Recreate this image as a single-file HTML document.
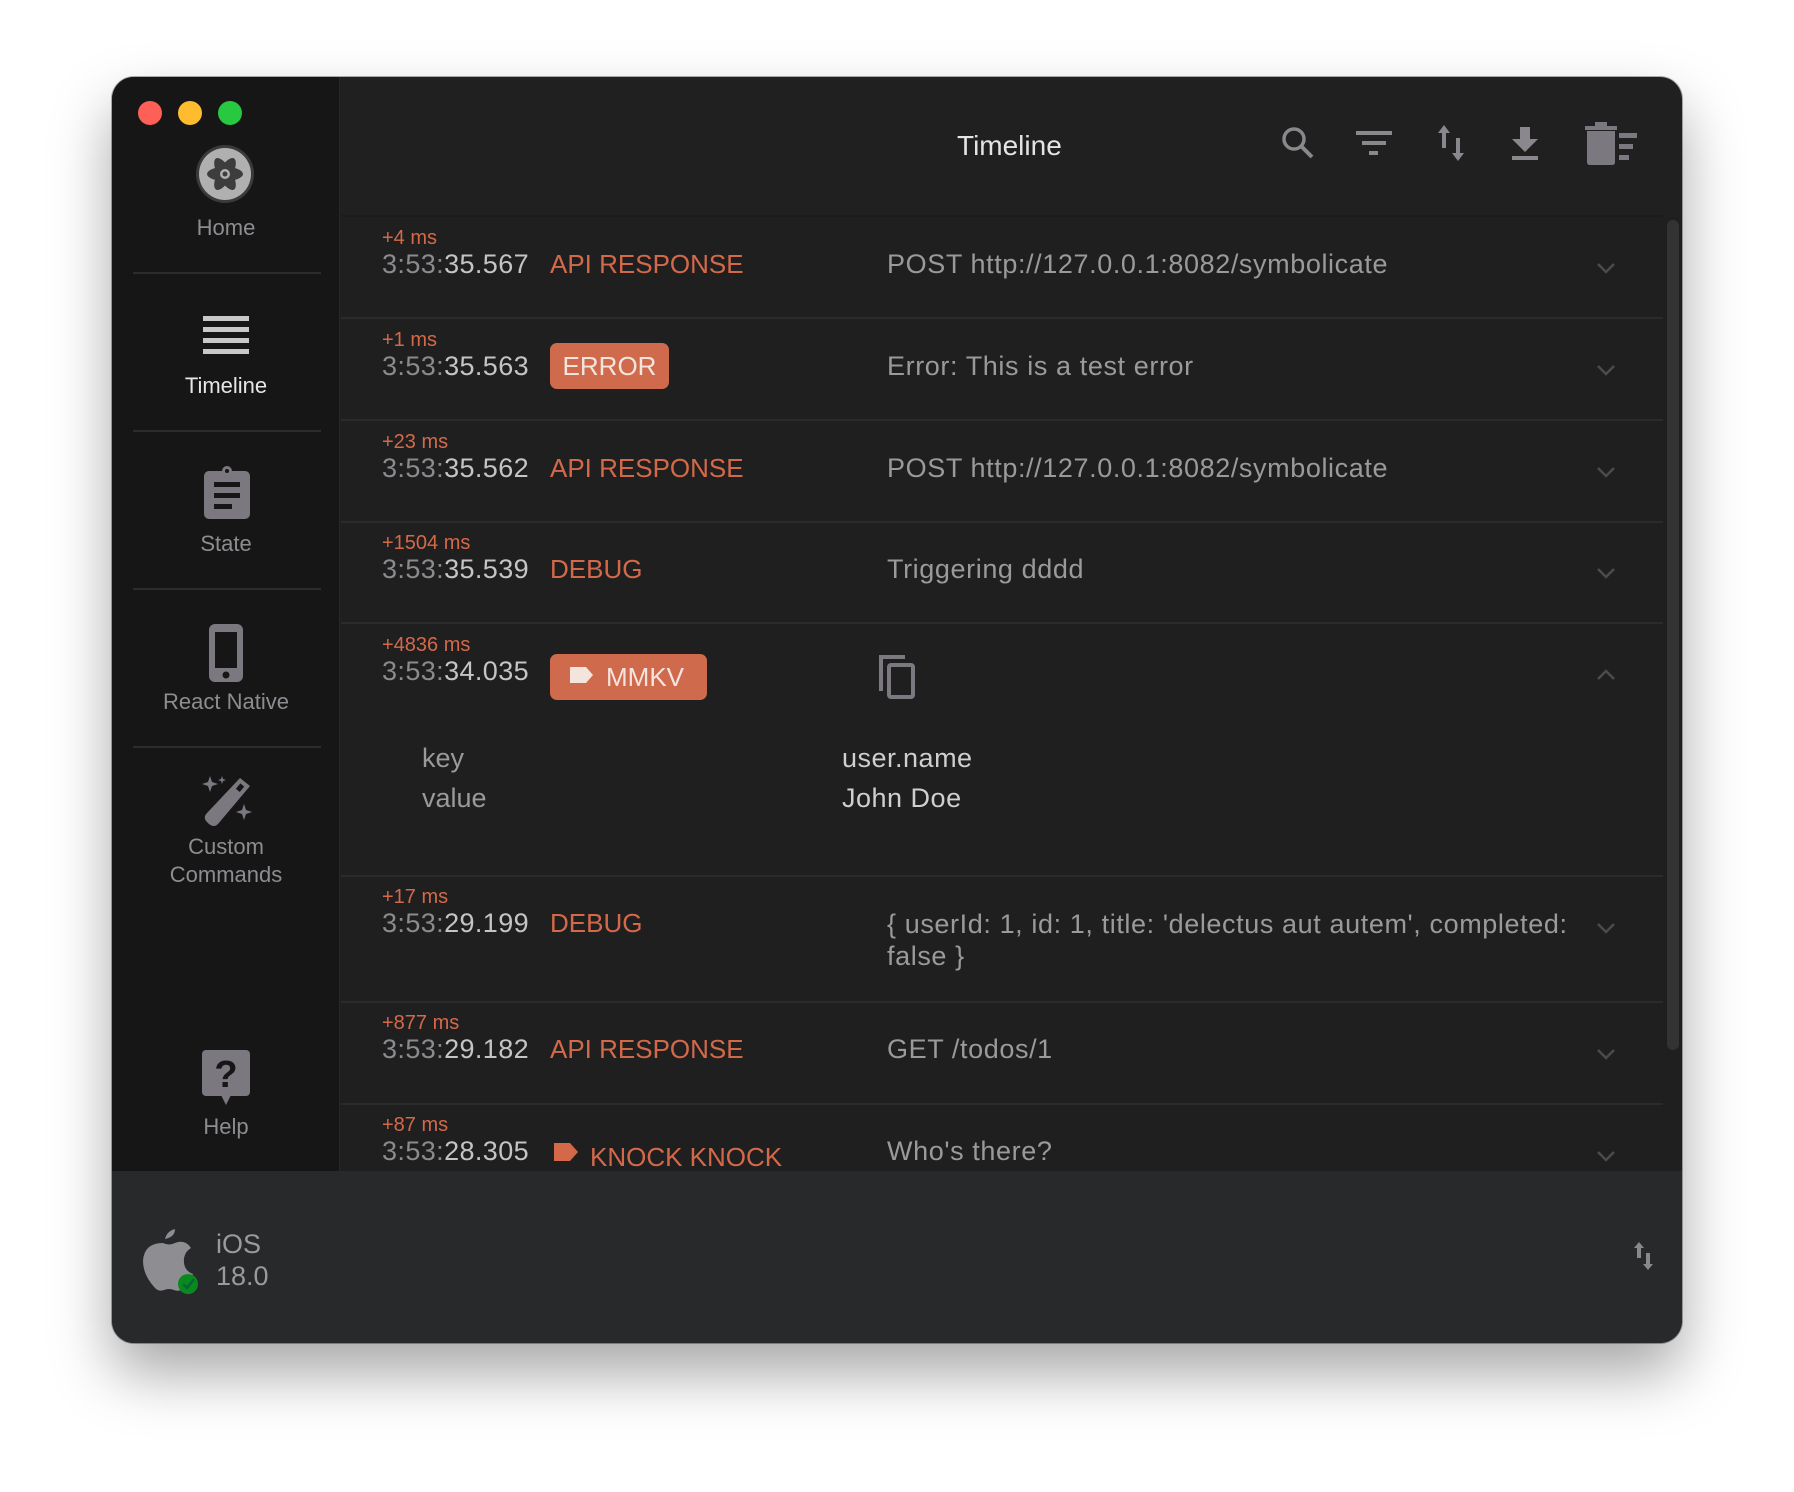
<!DOCTYPE html>
<html><head><meta charset="utf-8"><style>
*{margin:0;padding:0;box-sizing:border-box}
body{width:1794px;height:1492px;background:#fff;font-family:"Liberation Sans",sans-serif;position:relative;overflow:hidden}
.win{position:absolute;left:112px;top:77px;width:1570px;height:1266px;border-radius:22px;background:#202020;overflow:hidden;box-shadow:0 30px 60px rgba(0,0,0,.35),0 0 0 1px rgba(0,0,0,.3)}
.side{position:absolute;left:0;top:0;width:228px;height:1094px;background:#161616;border-right:1px solid #262626}
.a{position:absolute;white-space:nowrap}
.dot{position:absolute;width:24px;height:24px;border-radius:50%;top:24px}
.sl{position:absolute;left:0;width:228px;text-align:center;color:#8e8c91;font-size:22px}
.sep{position:absolute;left:21px;width:188px;height:2px;background:#2c2c2c}
.bot{position:absolute;left:0;top:1094px;width:1570px;height:172px;background:#28292b}
.rl{position:absolute;left:229px;width:1322px;height:2px;background:#2b2b2b}
.ms{position:absolute;left:270px;color:#d4694a;font-size:20px;white-space:nowrap}
.tm{position:absolute;left:270px;color:#8b8b8f;font-size:27px;letter-spacing:.4px;white-space:nowrap}
.tm b{font-weight:normal;color:#c4c4c4}
.tag{position:absolute;left:438px;color:#d4694a;font-size:26px;white-space:nowrap}
.msg{position:absolute;left:775px;color:#9a9a9c;font-size:27px;letter-spacing:.6px;white-space:nowrap}
.chev{position:absolute;left:1484px}
</style></head><body>
<div class="win">
 <div class="side">
  <div class="dot" style="left:26px;background:#fe5f57"></div>
  <div class="dot" style="left:66px;background:#febc2e"></div>
  <div class="dot" style="left:106px;background:#28c840"></div>
  <svg class="a" style="left:83px;top:67px" width="60" height="60" viewBox="0 0 60 60"><circle cx="30" cy="30" r="29" fill="#3a3a3a"/><circle cx="30" cy="30" r="26" fill="#b0b0b0"/><g fill="#3d3d3d"><ellipse cx="30" cy="30" rx="18" ry="7"/><ellipse cx="30" cy="30" rx="18" ry="7" transform="rotate(60 30 30)"/><ellipse cx="30" cy="30" rx="18" ry="7" transform="rotate(-60 30 30)"/></g><circle cx="30" cy="30" r="5" fill="#b0b0b0"/><circle cx="30" cy="30" r="2.5" fill="#3d3d3d"/></svg>
  <div class="sl" style="top:138px">Home</div>
  <div class="sep" style="top:195px"></div>
  <svg class="a" style="left:89px;top:237px" width="50" height="40"><g fill="#c8c8c8"><rect x="2" y="2" width="46" height="5"/><rect x="2" y="13" width="46" height="5"/><rect x="2" y="24" width="46" height="5"/><rect x="2" y="35" width="46" height="5"/></g></svg>
  <div class="sl" style="top:296px;color:#e6e6e6">Timeline</div>
  <div class="sep" style="top:353px"></div>
  <svg class="a" style="left:90px;top:389px" width="50" height="54" viewBox="0 0 50 54"><rect x="2" y="5" width="46" height="48" rx="5" fill="#7b7880"/><circle cx="25" cy="5" r="5" fill="#7b7880"/><circle cx="25" cy="5" r="2" fill="#161616"/><g fill="#161616"><rect x="12" y="16" width="26" height="5"/><rect x="12" y="27" width="26" height="5"/><rect x="12" y="38" width="18" height="5"/></g></svg>
  <div class="sl" style="top:454px">State</div>
  <div class="sep" style="top:511px"></div>
  <svg class="a" style="left:95px;top:545px" width="38" height="62" viewBox="0 0 38 62"><rect x="2" y="2" width="34" height="58" rx="6" fill="#7b7880"/><rect x="8" y="10" width="22" height="36" fill="#161616"/><circle cx="19" cy="53" r="3.5" fill="#161616"/></svg>
  <div class="sl" style="top:612px">React Native</div>
  <div class="sep" style="top:669px"></div>
  <svg class="a" style="left:88px;top:697px" width="56" height="54" viewBox="0 0 56 54"><g fill="#7b7880"><path d="M40 4 L50 12 L18 50 Q14 54 9 50 L6 47 Q3 43 7 39Z"/><path d="M10 2 L12 8 L18 10 L12 12 L10 18 L8 12 L2 10 L8 8Z"/><path d="M22 2 L23 5 L26 6 L23 7 L22 10 L21 7 L18 6 L21 5Z"/><path d="M44 30 L46 36 L52 38 L46 40 L44 46 L42 40 L36 38 L42 36Z"/></g><rect x="38" y="10" width="5" height="7" transform="rotate(40 40 13)" fill="#161616"/></svg>
  <div class="sl" style="top:756px;line-height:28px">Custom<br>Commands</div>
  <svg class="a" style="left:89px;top:972px" width="50" height="58" viewBox="0 0 50 58"><rect x="1" y="1" width="48" height="46" rx="4" fill="#7b7880"/><path d="M20 46 L25 56 L30 46Z" fill="#7b7880"/><text x="25" y="38" text-anchor="middle" font-family="Liberation Sans" font-weight="bold" font-size="38" fill="#161616">?</text></svg>
  <div class="sl" style="top:1037px">Help</div>
 </div>

 <div class="a" style="left:845px;top:53px;color:#e4e4e4;font-size:28px">Timeline</div>
 <svg class="a" style="left:1168px;top:48px" width="36" height="36" viewBox="0 0 36 36"><circle cx="14" cy="14" r="10" fill="none" stroke="#8a878d" stroke-width="3.5"/><path d="M21 21 L32 32" stroke="#8a878d" stroke-width="4"/></svg>
 <svg class="a" style="left:1243px;top:52px" width="38" height="30"><g fill="#8a878d"><rect x="1" y="2" width="36" height="4"/><rect x="7" y="12" width="24" height="4"/><rect x="14" y="22" width="9" height="4"/></g></svg>
 <svg class="a" style="left:1325px;top:47px" width="28" height="38" viewBox="0 0 28 38"><g fill="#8a878d"><path d="M7 1 L13 9 L9 9 L9 24 L5 24 L5 9 L1 9Z"/><path d="M21 37 L27 29 L23 29 L23 14 L19 14 L19 29 L15 29Z"/></g></svg>
 <svg class="a" style="left:1398px;top:48px" width="30" height="38" viewBox="0 0 30 38"><g fill="#8a878d"><path d="M10 2 L20 2 L20 14 L28 14 L15 27 L2 14 L10 14Z"/><rect x="2" y="31" width="26" height="4"/></g></svg>
 <svg class="a" style="left:1473px;top:43px" width="56" height="46" viewBox="0 0 56 46"><g fill="#7b7880"><rect x="0" y="6" width="32" height="4"/><rect x="10" y="2" width="12" height="5"/><path d="M2 11 L30 11 L30 42 Q30 45 27 45 L5 45 Q2 45 2 42Z"/><rect x="34" y="13" width="18" height="5"/><rect x="34" y="24" width="14" height="5"/><rect x="34" y="35" width="10" height="5"/></g></svg>
 <div class="rl" style="top:138px;background:#1b1b1b"></div>
 <div class="a" style="left:229px;top:140px;width:1341px;height:954px;background:#1f1f1f"></div>
 <div class="a" style="left:1555px;top:143px;width:12px;height:830px;border-radius:6px;background:#333"></div>

 <div class="ms" style="top:150px">+4 ms</div>
 <div class="tm" style="top:172px">3:53:<b>35.567</b></div>
 <div class="tag" style="top:172px">API RESPONSE</div>
 <div class="msg" style="top:172px">POST http://127.0.0.1:8082/symbolicate</div>
 <div class="rl" style="top:240px"></div>

 <div class="ms" style="top:252px">+1 ms</div>
 <div class="tm" style="top:274px">3:53:<b>35.563</b></div>
 <div class="a" style="left:438px;top:266px;width:119px;height:46px;border-radius:7px;background:#cf6b4c;color:#f4e4de;font-size:26px;text-align:center;line-height:46px">ERROR</div>
 <div class="msg" style="top:274px">Error: This is a test error</div>
 <div class="rl" style="top:342px"></div>

 <div class="ms" style="top:354px">+23 ms</div>
 <div class="tm" style="top:376px">3:53:<b>35.562</b></div>
 <div class="tag" style="top:376px">API RESPONSE</div>
 <div class="msg" style="top:376px">POST http://127.0.0.1:8082/symbolicate</div>
 <div class="rl" style="top:444px"></div>

 <div class="ms" style="top:455px">+1504 ms</div>
 <div class="tm" style="top:477px">3:53:<b>35.539</b></div>
 <div class="tag" style="top:477px">DEBUG</div>
 <div class="msg" style="top:477px">Triggering dddd</div>
 <div class="rl" style="top:545px"></div>

 <div class="ms" style="top:557px">+4836 ms</div>
 <div class="tm" style="top:579px">3:53:<b>34.035</b></div>
 <div class="a" style="left:438px;top:577px;width:157px;height:46px;border-radius:7px;background:#cf6b4c;color:#f4e4de;font-size:26px;line-height:46px"><svg style="position:absolute;left:18px;top:11px" width="26" height="20"><path d="M2 2 L18 2 L25 10 L18 18 L2 18Z" fill="#f4e4de"/></svg><span style="position:absolute;left:56px">MMKV</span></div>
 <svg class="a" style="left:765px;top:576px" width="40" height="46" viewBox="0 0 40 46"><g fill="none" stroke="#7b7880" stroke-width="4"><path d="M4 38 L4 4 L28 4"/><rect x="12" y="12" width="24" height="32" rx="2"/></g></svg>
 <div class="a" style="left:310px;top:666px;color:#9a9a9c;font-size:27px">key</div>
 <div class="a" style="left:310px;top:706px;color:#9a9a9c;font-size:27px">value</div>
 <div class="a" style="left:730px;top:666px;color:#cfcfcf;font-size:27px;letter-spacing:.5px">user.name</div>
 <div class="a" style="left:730px;top:706px;color:#cfcfcf;font-size:27px;letter-spacing:.5px">John Doe</div>
 <div class="rl" style="top:798px"></div>

 <div class="ms" style="top:809px">+17 ms</div>
 <div class="tm" style="top:831px">3:53:<b>29.199</b></div>
 <div class="tag" style="top:831px">DEBUG</div>
 <div class="msg" style="top:831px;line-height:32px">{ userId: 1, id: 1, title: 'delectus aut autem', completed:<br>false }</div>
 <div class="rl" style="top:924px"></div>

 <div class="ms" style="top:935px">+877 ms</div>
 <div class="tm" style="top:957px">3:53:<b>29.182</b></div>
 <div class="tag" style="top:957px">API RESPONSE</div>
 <div class="msg" style="top:957px">GET /todos/1</div>
 <div class="rl" style="top:1026px"></div>

 <div class="ms" style="top:1037px">+87 ms</div>
 <div class="tm" style="top:1059px">3:53:<b>28.305</b></div>
 <svg class="a" style="left:441px;top:1065px" width="26" height="20"><path d="M1 1 L17 1 L25 10 L17 19 L1 19Z" fill="#d4694a"/></svg>
 <div class="tag" style="left:478px;top:1065px">KNOCK KNOCK</div>
 <div class="msg" style="top:1059px">Who's there?</div>

 <svg class="chev" style="top:185px" width="20" height="12"><path d="M2 2 L10 10 L18 2" fill="none" stroke="#4b4b4f" stroke-width="2.5"/></svg>
 <svg class="chev" style="top:287px" width="20" height="12"><path d="M2 2 L10 10 L18 2" fill="none" stroke="#4b4b4f" stroke-width="2.5"/></svg>
 <svg class="chev" style="top:389px" width="20" height="12"><path d="M2 2 L10 10 L18 2" fill="none" stroke="#4b4b4f" stroke-width="2.5"/></svg>
 <svg class="chev" style="top:490px" width="20" height="12"><path d="M2 2 L10 10 L18 2" fill="none" stroke="#4b4b4f" stroke-width="2.5"/></svg>
 <svg class="chev" style="top:592px" width="20" height="12"><path d="M2 10 L10 2 L18 10" fill="none" stroke="#4b4b4f" stroke-width="2.5"/></svg>
 <svg class="chev" style="top:845px" width="20" height="12"><path d="M2 2 L10 10 L18 2" fill="none" stroke="#4b4b4f" stroke-width="2.5"/></svg>
 <svg class="chev" style="top:971px" width="20" height="12"><path d="M2 2 L10 10 L18 2" fill="none" stroke="#4b4b4f" stroke-width="2.5"/></svg>
 <svg class="chev" style="top:1073px" width="20" height="12"><path d="M2 2 L10 10 L18 2" fill="none" stroke="#4b4b4f" stroke-width="2.5"/></svg>

 <div class="bot">
  <svg class="a" style="left:27px;top:58px" width="62" height="66" viewBox="0 0 62 66"><path d="M26 10 Q28 2 36 0 Q36 8 26 10Z" fill="#8e8e92"/><path d="M24 14 Q30 17 36 14 Q46 10 52 19 Q44 24 45 34 Q46 42 54 45 Q50 56 44 60 Q40 63 35 61 Q30 59 25 61 Q20 63 16 59 Q4 46 4 32 Q5 14 24 14Z" fill="#8e8e92"/><circle cx="49" cy="55" r="10" fill="#0a8a1e"/><path d="M44 55 L48 59 L55 50" fill="none" stroke="#063" stroke-width="2.5"/></svg>
  <div class="a" style="left:104px;top:57px;color:#9a9a9c;font-size:27px;line-height:32px">iOS<br>18.0</div>
  <svg class="a" style="left:1521px;top:70px" width="22" height="30" viewBox="0 0 22 30"><g fill="#8a878d"><path d="M6 1 L11 7 L8 7 L8 17 L4 17 L4 7 L1 7Z"/><path d="M15 29 L20 23 L17 23 L17 12 L13 12 L13 23 L10 23Z"/></g></svg>
 </div>
</div>
</body></html>
